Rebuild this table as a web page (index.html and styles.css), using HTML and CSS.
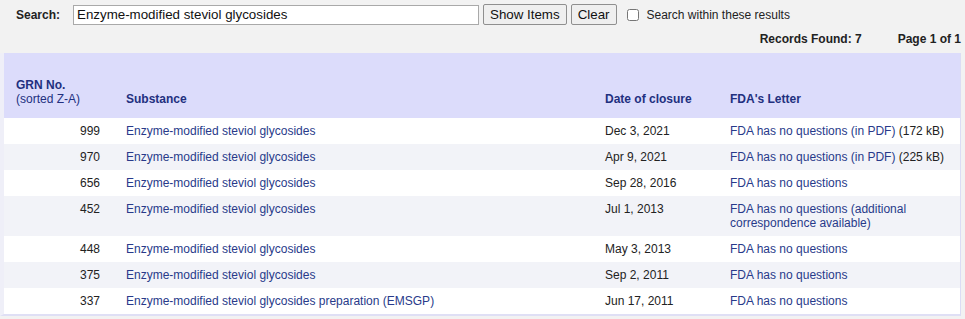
FILE: index.html
```html
<!DOCTYPE html>
<html>
<head>
<meta charset="utf-8">
<link rel="stylesheet" href="styles.css">
</head>
<body>
<form class="search-row">
  <label class="search-label" for="q">Search:</label>
  <input id="q" class="search-input" type="text" value="Enzyme-modified steviol glycosides">
  <button type="button" class="btn">Show Items</button>
  <button type="button" class="btn">Clear</button>
  <label class="within"><input type="checkbox" class="cb"> Search within these results</label>
</form>
<div class="records">
  <span>Records Found: 7</span>
  <span>Page 1 of 1</span>
</div>
<div class="table-wrap">
<table class="results">
  <colgroup>
    <col class="c1"><col class="c2"><col class="c3"><col class="c4">
  </colgroup>
  <thead>
    <tr>
      <th class="grn-h"><span class="b">GRN No.</span><br>(sorted Z-A)</th>
      <th>Substance</th>
      <th>Date of closure</th>
      <th>FDA's Letter</th>
    </tr>
  </thead>
  <tbody>
    <tr><td class="num">999</td><td><a href="#">Enzyme-modified steviol glycosides</a></td><td>Dec 3, 2021</td><td><a href="#">FDA has no questions (in PDF)</a> (172 kB)</td></tr>
    <tr><td class="num">970</td><td><a href="#">Enzyme-modified steviol glycosides</a></td><td>Apr 9, 2021</td><td><a href="#">FDA has no questions (in PDF)</a> (225 kB)</td></tr>
    <tr><td class="num">656</td><td><a href="#">Enzyme-modified steviol glycosides</a></td><td>Sep 28, 2016</td><td><a href="#">FDA has no questions</a></td></tr>
    <tr><td class="num">452</td><td><a href="#">Enzyme-modified steviol glycosides</a></td><td>Jul 1, 2013</td><td><a href="#">FDA has no questions (additional correspondence available)</a></td></tr>
    <tr><td class="num">448</td><td><a href="#">Enzyme-modified steviol glycosides</a></td><td>May 3, 2013</td><td><a href="#">FDA has no questions</a></td></tr>
    <tr><td class="num">375</td><td><a href="#">Enzyme-modified steviol glycosides</a></td><td>Sep 2, 2011</td><td><a href="#">FDA has no questions</a></td></tr>
    <tr><td class="num">337</td><td><a href="#">Enzyme-modified steviol glycosides preparation (EMSGP)</a></td><td>Jun 17, 2011</td><td><a href="#">FDA has no questions</a></td></tr>
  </tbody>
</table>
</div>
</body>
</html>
```
FILE: styles.css
```css
html, body {
  margin: 0;
  padding: 0;
  background: #f2f2f2;
  font-family: "Liberation Sans", Arial, sans-serif;
  font-size: 12px;
  color: #222;
}
.search-row {
  display: flex;
  align-items: center;
  margin: 0;
  padding: 4px 0 0 16px;
  height: 21px;
}
.search-label {
  font-weight: bold;
  width: 57px;
  color: #222;
}
.search-input {
  box-sizing: border-box;
  width: 406px;
  height: 20px;
  margin: 0 4px 0 0;
  padding: 0 3px;
  border: 1px solid #a9a9a9;
  background: #fff;
  font-family: "Liberation Sans", Arial, sans-serif;
  font-size: 13.33px;
  color: #111;
}
.btn {
  box-sizing: border-box;
  height: 21px;
  margin: 0 4px 0 0;
  padding: 0 6px;
  border: 1px solid #8f8f8f;
  border-radius: 2px;
  background: #efefef;
  font-family: "Liberation Sans", Arial, sans-serif;
  font-size: 13.33px;
  color: #111;
}
.within {
  display: flex;
  align-items: center;
  margin-left: 4px;
  color: #222;
}
.cb {
  width: 12px;
  height: 12px;
  margin: 0 8px 0 2px;
}
.records {
  display: flex;
  justify-content: flex-end;
  gap: 36px;
  height: 28px;
  align-items: center;
  padding-right: 4px;
  font-weight: bold;
  font-size: 12px;
  color: #222;
}
.table-wrap {
  margin: 0;
  padding: 0;
  border-left: 4px solid #efeff8;
  border-right: 1px solid #dcdcf4;
  border-bottom: 2px solid #dfdff5;
  width: 956px;
  background: #fff;
}
.results {
  width: 956px;
  border-collapse: collapse;
  table-layout: fixed;
}
.c1 { width: 110px; }
.c2 { width: 479px; }
.c3 { width: 125px; }
.c4 { width: 242px; }
.results th {
  background: #dcdcfb;
  color: #22307f;
  font-weight: bold;
  text-align: left;
  vertical-align: bottom;
  line-height: 14px;
  padding: 25px 12px 12px 12px;
}
.results th.grn-h {
  font-weight: normal;
}
.results th .b {
  font-weight: bold;
}
.results td {
  line-height: 14px;
  padding: 6px 12px;
  vertical-align: top;
  color: #222;
}
.results td.num {
  text-align: right;
  padding-right: 14px;
}
.results tbody tr:nth-child(even) td {
  background: #f2f3f8;
}
.results a {
  color: #283a8a;
  text-decoration: none;
}
```
